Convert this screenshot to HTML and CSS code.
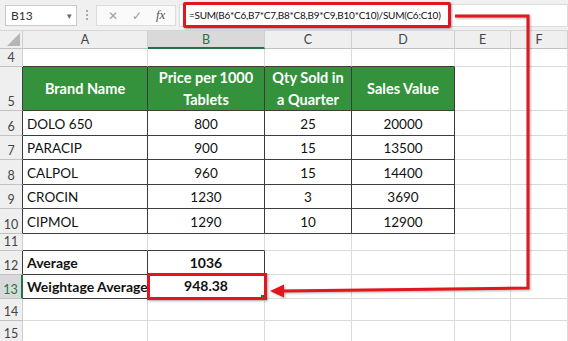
FILE: index.html
```html
<!DOCTYPE html>
<html lang="en">
<head>
    <meta charset="UTF-8">
    <title>Weightage Average</title>
    <link rel="stylesheet" href="styles.css">
</head>
<body>

<div class="fbar">
    <div class="namebox"><span>B13</span><span class="caret">&#9662;</span></div>
    <div class="dots"><i></i><i></i><i></i></div>
    <div class="tools">
        <span class="x">&#10005;</span>
        <span class="ok">&#10003;</span>
        <span class="fx">fx</span>
    </div>
    <div class="field">
        <span class="formula">=SUM(B6*C6,B7*C7,B8*C8,B9*C9,B10*C10)/SUM(C6:C10)</span>
    </div>
</div>

<div class="sheet">
    <!-- column headers -->
    <div class="corner"><svg width="14" height="14" viewBox="0 0 14 14"><polygon points="14,1 14,14 1,14" fill="#b5b5b5"/></svg></div>
    <div class="ch">A</div>
    <div class="ch sel">B</div>
    <div class="ch">C</div>
    <div class="ch">D</div>
    <div class="ch">E</div>
    <div class="ch">F</div>

    <!-- row 4 -->
    <div class="rh">4</div>
    <div class="c dk-b"></div>
    <div class="c dk-b"></div>
    <div class="c dk-b"></div>
    <div class="c dk-b"></div>
    <div class="c"></div>
    <div class="c"></div>

    <!-- row 5 -->
    <div class="rh dk-r">5</div>
    <div class="c dk th">Brand Name</div>
    <div class="c dk th">Price per 1000<br>Tablets</div>
    <div class="c dk th">Qty Sold in<br>a Quarter</div>
    <div class="c dk th">Sales Value</div>
    <div class="c"></div>
    <div class="c"></div>

    <!-- rows 6-10 -->
    <div class="rh dk-r">6</div>
    <div class="c dk">DOLO 650</div>
    <div class="c dk num">800</div>
    <div class="c dk num">25</div>
    <div class="c dk num">20000</div>
    <div class="c"></div>
    <div class="c"></div>

    <div class="rh dk-r">7</div>
    <div class="c dk">PARACIP</div>
    <div class="c dk num">900</div>
    <div class="c dk num">15</div>
    <div class="c dk num">13500</div>
    <div class="c"></div>
    <div class="c"></div>

    <div class="rh dk-r">8</div>
    <div class="c dk">CALPOL</div>
    <div class="c dk num">960</div>
    <div class="c dk num">15</div>
    <div class="c dk num">14400</div>
    <div class="c"></div>
    <div class="c"></div>

    <div class="rh dk-r">9</div>
    <div class="c dk">CROCIN</div>
    <div class="c dk num">1230</div>
    <div class="c dk num">3</div>
    <div class="c dk num">3690</div>
    <div class="c"></div>
    <div class="c"></div>

    <div class="rh dk-r">10</div>
    <div class="c dk">CIPMOL</div>
    <div class="c dk num">1290</div>
    <div class="c dk num">10</div>
    <div class="c dk num">12900</div>
    <div class="c"></div>
    <div class="c"></div>

    <!-- row 11 -->
    <div class="rh">11</div>
    <div class="c dk-b"></div>
    <div class="c dk-b"></div>
    <div class="c"></div>
    <div class="c"></div>
    <div class="c"></div>
    <div class="c"></div>

    <!-- row 12 -->
    <div class="rh dk-r">12</div>
    <div class="c dk bold">Average</div>
    <div class="c dk num bold">1036</div>
    <div class="c"></div>
    <div class="c"></div>
    <div class="c"></div>
    <div class="c"></div>

    <!-- row 13 -->
    <div class="rh sel">13</div>
    <div class="c dk bold">Weightage Average</div>
    <div class="c dk num bold active">948.38<span class="handle"></span><span class="hl"></span></div>
    <div class="c"></div>
    <div class="c"></div>
    <div class="c"></div>
    <div class="c"></div>

    <!-- rows 14-15 -->
    <div class="rh">14</div>
    <div class="c"></div>
    <div class="c"></div>
    <div class="c"></div>
    <div class="c"></div>
    <div class="c"></div>
    <div class="c"></div>

    <div class="rh">15</div>
    <div class="c"></div>
    <div class="c"></div>
    <div class="c"></div>
    <div class="c"></div>
    <div class="c"></div>
    <div class="c"></div>
</div>

<!-- connector from formula to result cell -->
<svg class="connector" width="568" height="341" viewBox="0 0 568 341">
    <path d="M455 16 L528 16 L528 288 L282 291" fill="none" stroke="#e3161d" stroke-width="3"/>
    <polygon points="270,291 284,284.5 284,297.5" fill="#e3161d"/>
</svg>

</body>
</html>
```

FILE: styles.css
```css
body {
    margin: 0;
    width: 568px;
    height: 341px;
    overflow: hidden;
    position: relative;
    background-color: #ffffff;
    font-family: Lato, "Liberation Sans", sans-serif;
    color: #111111;
}

/* formula bar */
.fbar {
    display: flex;
    align-items: center;
    height: 31px;
    padding-left: 5px;
    background-color: #f0f0f0;
    border-bottom: 1px solid #d6d6d6;
    box-sizing: border-box;
}
.namebox {
    display: flex;
    align-items: center;
    justify-content: space-between;
    width: 72px;
    height: 21px;
    padding: 0 4px 0 5px;
    box-sizing: border-box;
    background-color: #ffffff;
    border: 1px solid #c9c9c9;
    font-size: 12px;
    color: #333333;
}
.caret {
    font-size: 9px;
    color: #666666;
}
.dots {
    display: flex;
    flex-direction: column;
    gap: 2px;
    margin: 0 8px 0 9px;
}
.dots i {
    width: 2px;
    height: 2px;
    background-color: #a8a8a8;
}
.tools {
    display: flex;
    align-items: center;
    height: 21px;
    width: 80px;
    padding-left: 11px;
    gap: 14px;
    box-sizing: border-box;
    background-color: #fafafa;
    border: 1px solid #dcdcdc;
    color: #a0a0a0;
    font-size: 12px;
}
.tools .fx {
    font-family: "Liberation Serif", serif;
    font-style: italic;
    font-size: 13px;
    color: #555555;
}
.field {
    display: flex;
    align-items: center;
    flex: 1;
    height: 21px;
    margin-left: 3px;
    padding-left: 3px;
    background-color: #ffffff;
    border: 1px solid #dcdcdc;
}
.formula {
    display: flex;
    align-items: center;
    width: 268px;
    height: 26px;
    padding-left: 3px;
    box-sizing: border-box;
    border: 3px solid #e3161d;
    border-radius: 2px;
    box-shadow: 1px 1px 2px rgba(0, 0, 0, 0.35);
    font-size: 10px;
    letter-spacing: -0.25px;
    color: #111111;
    white-space: nowrap;
}

/* sheet grid */
.sheet {
    display: grid;
    grid-template-columns: 23px 125px 117px 87px 103px 56px 57px;
    grid-template-rows: 18px 18px 44px 25px 24px 25px 24px 25px 17px 24px 24px 22px 22px;
}
.corner, .ch, .rh {
    background-color: #efefef;
    color: #444444;
    font-size: 12.5px;
    box-sizing: border-box;
    border-right: 1px solid #cfcfcf;
    border-bottom: 1px solid #c2c2c2;
}
.corner {
    display: flex;
    align-items: flex-end;
    justify-content: flex-end;
    padding: 0 2px 2px 0;
}
.ch {
    display: flex;
    align-items: center;
    justify-content: center;
}
.ch.sel {
    background-color: #d9d9d9;
    color: #217346;
    border-bottom: 2px solid #217346;
}
.rh {
    display: flex;
    align-items: flex-end;
    justify-content: center;
    padding-bottom: 1px;
}
.rh.dk-r {
    border-right-color: #3c3c3c;
}
.rh.sel {
    background-color: #d9d9d9;
    color: #217346;
    border-right: 2px solid #217346;
}

.c {
    display: flex;
    align-items: flex-end;
    padding: 0 3px 3px 4px;
    box-sizing: border-box;
    border-right: 1px solid #dadada;
    border-bottom: 1px solid #dadada;
    font-size: 13.5px;
    line-height: 16px;
    white-space: nowrap;
}
.dk {
    border-right-color: #3c3c3c;
    border-bottom-color: #3c3c3c;
}
.dk-b {
    border-bottom-color: #3c3c3c;
}
.th {
    align-items: center;
    justify-content: center;
    text-align: center;
    padding: 0;
    background-color: #35923c;
    color: #ffffff;
    font-weight: bold;
    font-size: 14.5px;
    line-height: 22px;
}
.num {
    justify-content: center;
    padding-left: 0;
    padding-right: 0;
}
.bold {
    font-weight: bold;
    font-size: 14px;
}

/* active cell and its highlight box */
.active {
    position: relative;
    border-bottom: 2px solid #217346;
}
.handle {
    position: absolute;
    right: -3px;
    bottom: -4px;
    width: 5px;
    height: 5px;
    background-color: #217346;
    border: 1px solid #ffffff;
}
.hl {
    position: absolute;
    top: -2px;
    left: -1px;
    right: -3px;
    bottom: -3px;
    border: 3px solid #e3161d;
    box-shadow: 1px 1px 2px rgba(0, 0, 0, 0.35);
}

.connector {
    position: absolute;
    top: 0;
    left: 0;
    pointer-events: none;
    filter: drop-shadow(1px 1px 1px rgba(0, 0, 0, 0.3));
}
```
